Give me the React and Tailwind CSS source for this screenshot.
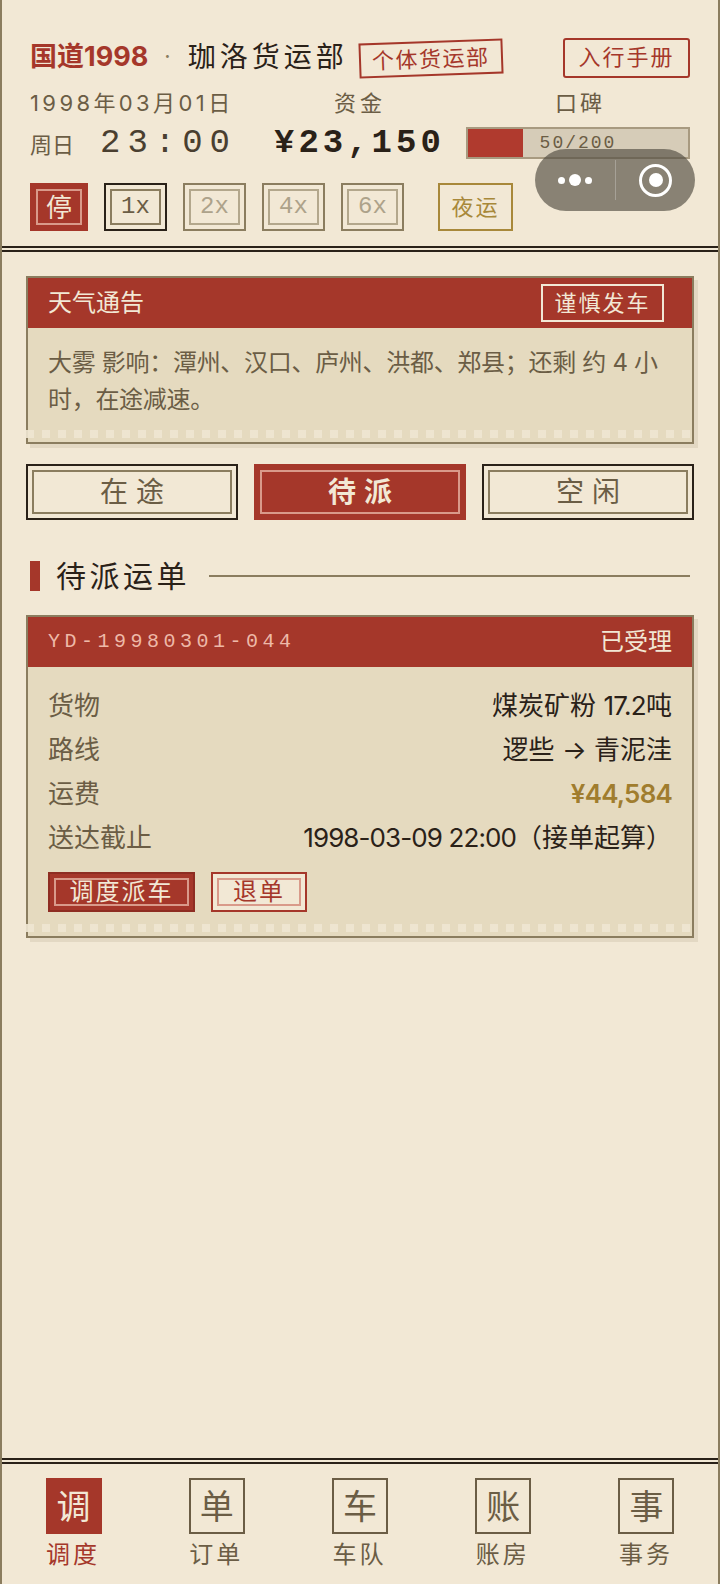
const sans = "font-['Inter','Noto_Sans_CJK_SC',sans-serif]";

function Perf() {
  return (
    <div className="absolute left-[-2px] right-0 bottom-[4px] h-[8px] opacity-90 bg-[repeating-linear-gradient(90deg,#efe6d2_0px,#efe6d2_8px,transparent_8px,transparent_16px)]" />
  );
}

function Speed({ label, active }) {
  return (
    <div className={`w-[63px] h-[48px] p-[4px] border-2 ${active ? "border-[#2a2118]" : "border-[#8b7d5f]"}`}>
      <div className={`h-full border-2 flex items-center justify-center text-[24px] font-['Liberation_Mono',monospace] ${active ? "border-[#8b7d5f] text-[#6b5d45]" : "border-[#b3a78c] text-[#ada28a]"}`}>
        {label}
      </div>
    </div>
  );
}

function Tab({ label, active }) {
  return (
    <div className={`flex-1 h-[56px] p-[4px] border-2 ${active ? "border-[#a5372a] bg-[#a5372a]" : "border-[#2a2118]"}`}>
      <div className={`h-full border-2 flex items-center justify-center text-[28px] tracking-[8px] pl-[8px] ${active ? "border-[#d99a8a] text-[#f2e8d5] font-bold" : "border-[#8b7d5f] text-[#6b5d45]"}`}>
        {label}
      </div>
    </div>
  );
}

function Row({ k, children }) {
  return (
    <div className="flex justify-between items-center h-[44px] text-[26px]">
      <span className="text-[#6b5d45]">{k}</span>
      {children}
    </div>
  );
}

function NavItem({ ch, label, active }) {
  return (
    <div className="flex-1 flex flex-col items-center">
      <div className={`w-[56px] h-[56px] flex items-center justify-center text-[34px] border-2 ${active ? "bg-[#a5372a] border-[#a5372a] text-[#f2e8d5]" : "border-[#6b5d45] text-[#6b5d45]"}`}>
        {ch}
      </div>
      <div className={`mt-[3px] text-[24px] leading-[36px] tracking-[3px] pr-[1px] ${active ? "text-[#a5372a]" : "text-[#6b5d45]"}`}>{label}</div>
    </div>
  );
}

export default function App() {
  return (
    <div className={`relative h-[1584px] w-[720px] flex flex-col bg-[#f2e8d5] border-x-2 border-[#8b7d5f] text-[#2a2118] ${sans}`}>
      <header className="h-[252px] shrink-0 border-b-[6px] border-double border-[#2a2118] pl-[28px] pr-[28px]">
        <div className="pt-[27px] h-[86px] flex items-center">
          <span className="text-[27px] font-bold text-[#a5372a] leading-none whitespace-nowrap">国道1998</span>
          <span className="ml-[16px] text-[22px] text-[#8b7d5f]">·</span>
          <span className="ml-[17px] text-[28px] tracking-[4px] leading-none whitespace-nowrap">珈洛货运部</span>
          <span className="ml-[11px] mt-[3px] -rotate-2 border-2 border-[#a5372a] text-[#a5372a] text-[22px] tracking-[1.5px] leading-none px-[11px] h-[35px] flex items-center whitespace-nowrap">个体货运部</span>
          <span className="ml-auto mt-[2px] w-[127px] h-[40px] border-2 border-[#a5372a] rounded-[3px] text-[#a5372a] text-[22px] tracking-[2px] flex items-center justify-center whitespace-nowrap">入行手册</span>
        </div>
        <div className="h-[34px] flex items-center text-[22px] text-[#6b5d45]">
          <span className="w-[304px] tracking-[3.4px] leading-none whitespace-nowrap">1998年03月01日</span>
          <span className="tracking-[4px] leading-none">资金</span>
          <span className="ml-[169px] tracking-[3px] leading-none">口碑</span>
        </div>
        <div className="h-[42px] mt-[2px] flex items-center">
          <span className="w-[70px] text-[22px] text-[#6b5d45] mt-[4px]">周日</span>
          <span className="w-[174px] text-[34px] tracking-[7px] font-['Liberation_Mono',monospace] leading-none text-[#4a3f30] whitespace-nowrap">23:00</span>
          <span className="w-[192px] text-[34px] font-bold tracking-[4px] font-['Liberation_Mono',monospace] leading-none whitespace-nowrap">¥23,150</span>
          <div className="relative w-[224px] h-[32px] border-2 border-[#a89a80] bg-[#d6ccb8]">
            <div className="absolute left-0 top-0 h-full w-[55px] bg-[#b03a2e]" />
            <div className="relative text-center text-[18px] tracking-[2px] leading-[28px] text-[#6b5d45] font-['Liberation_Mono',monospace]">50/200</div>
          </div>
        </div>
        <div className="mt-[19px] flex items-center">
          <div className="w-[58px] h-[48px] p-[6px] bg-[#a5372a]">
            <div className="h-full border-2 border-[#d99a8a] flex items-center justify-center text-[26px] text-[#f2e8d5]">停</div>
          </div>
          <div className="ml-[16px] flex gap-[16px]">
            <Speed label="1x" active />
            <Speed label="2x" />
            <Speed label="4x" />
            <Speed label="6x" />
          </div>
          <div className="ml-[34px] w-[75px] h-[48px] border-2 border-[#a8883a] text-[#a8883a] text-[22px] tracking-[2px] flex items-center justify-center">夜运</div>
        </div>
      </header>

      <main className="flex-1 px-[24px] pt-[24px]">
        <section className="relative border-2 border-[#8b7d5f] bg-[#e5dabf] shadow-[4px_4px_0_rgba(139,125,95,0.15)] h-[168px]">
          <div className="h-[50px] bg-[#a5372a] flex items-center justify-between pl-[20px] pr-[28px] text-[#f2e8d5]">
            <span className="text-[24px]">天气通告</span>
            <span className="w-[123px] h-[38px] border-2 border-[#f2e8d5] text-[22px] tracking-[2px] flex items-center justify-center whitespace-nowrap">谨慎发车</span>
          </div>
          <p className="px-[20px] pt-[16px] text-[24px] tracking-[-0.3px] leading-[37px] text-[#6b5d45]">大雾 影响：潭州、汉口、庐州、洪都、郑县；还剩 约 4 小时，在途减速。</p>
          <Perf />
        </section>

        <div className="mt-[20px] flex gap-[16px]">
          <Tab label="在途" />
          <Tab label="待派" active />
          <Tab label="空闲" />
        </div>

        <div className="mt-[41px] flex items-center pl-[4px]">
          <div className="w-[10px] h-[30px] bg-[#a5372a]" />
          <h2 className="ml-[16px] text-[30px] font-normal tracking-[3.5px] leading-none whitespace-nowrap">待派运单</h2>
          <div className="ml-[19px] mr-[4px] flex-1 h-[2px] bg-[#8b7d5f]" />
        </div>

        <section className="relative mt-[24px] border-2 border-[#8b7d5f] bg-[#e5dabf] shadow-[4px_4px_0_rgba(139,125,95,0.15)] h-[323px]">
          <div className="h-[50px] bg-[#a5372a] flex items-center justify-between px-[20px]">
            <span className="text-[20px] tracking-[4.5px] text-[#eeb9a8] font-['Liberation_Mono',monospace]">YD-19980301-044</span>
            <span className="text-[24px] text-[#f2e8d5]">已受理</span>
          </div>
          <div className="px-[20px] pt-[16px]">
            <Row k="货物"><span>煤炭矿粉 <span className="tracking-[-0.7px]">17.2</span>吨</span></Row>
            <Row k="路线"><span>逻些 → 青泥洼</span></Row>
            <Row k="运费"><span className="font-semibold tracking-[-0.8px] text-[#a07d2e]">¥44,584</span></Row>
            <Row k="送达截止"><span><span className="tracking-[-0.9px]">1998-03-09 22:00</span>（接单起算）</span></Row>
            <div className="mt-[13px] flex gap-[16px]">
              <div className="w-[147px] h-[40px] p-[4px] bg-[#a5372a] border-2 border-[#8e2d22]">
                <div className="h-full border-2 border-[#d99a8a] flex items-center justify-center text-[24px] tracking-[2px] text-[#f2e8d5] leading-none whitespace-nowrap">调度派车</div>
              </div>
              <div className="w-[96px] h-[40px] p-[4px] bg-[#f2e8d5] border-2 border-[#a5372a]">
                <div className="h-full border-2 border-[#d99a8a] flex items-center justify-center text-[24px] tracking-[2px] text-[#a5372a] leading-none whitespace-nowrap">退单</div>
              </div>
            </div>
          </div>
          <Perf />
        </section>
      </main>

      <nav className="h-[126px] shrink-0 border-t-[6px] border-double border-[#2a2118] pt-[14px] flex">
        <NavItem ch="调" label="调度" active />
        <NavItem ch="单" label="订单" />
        <NavItem ch="车" label="车队" />
        <NavItem ch="账" label="账房" />
        <NavItem ch="事" label="事务" />
      </nav>

      <div className="absolute left-[533px] top-[149px] w-[160px] h-[62px] rounded-full bg-[rgba(80,75,65,0.65)] flex items-center">
        <div className="w-[80px] flex items-center justify-center gap-[4px]">
          <span className="w-[7px] h-[7px] rounded-full bg-white" />
          <span className="w-[12px] h-[12px] rounded-full bg-white" />
          <span className="w-[7px] h-[7px] rounded-full bg-white" />
        </div>
        <div className="w-[1px] h-[40px] bg-[rgba(255,255,255,0.25)]" />
        <div className="flex-1 flex items-center justify-center">
          <div className="w-[33px] h-[33px] rounded-full border-[3px] border-white flex items-center justify-center">
            <span className="w-[14px] h-[14px] rounded-full bg-white" />
          </div>
        </div>
      </div>
    </div>
  );
}
